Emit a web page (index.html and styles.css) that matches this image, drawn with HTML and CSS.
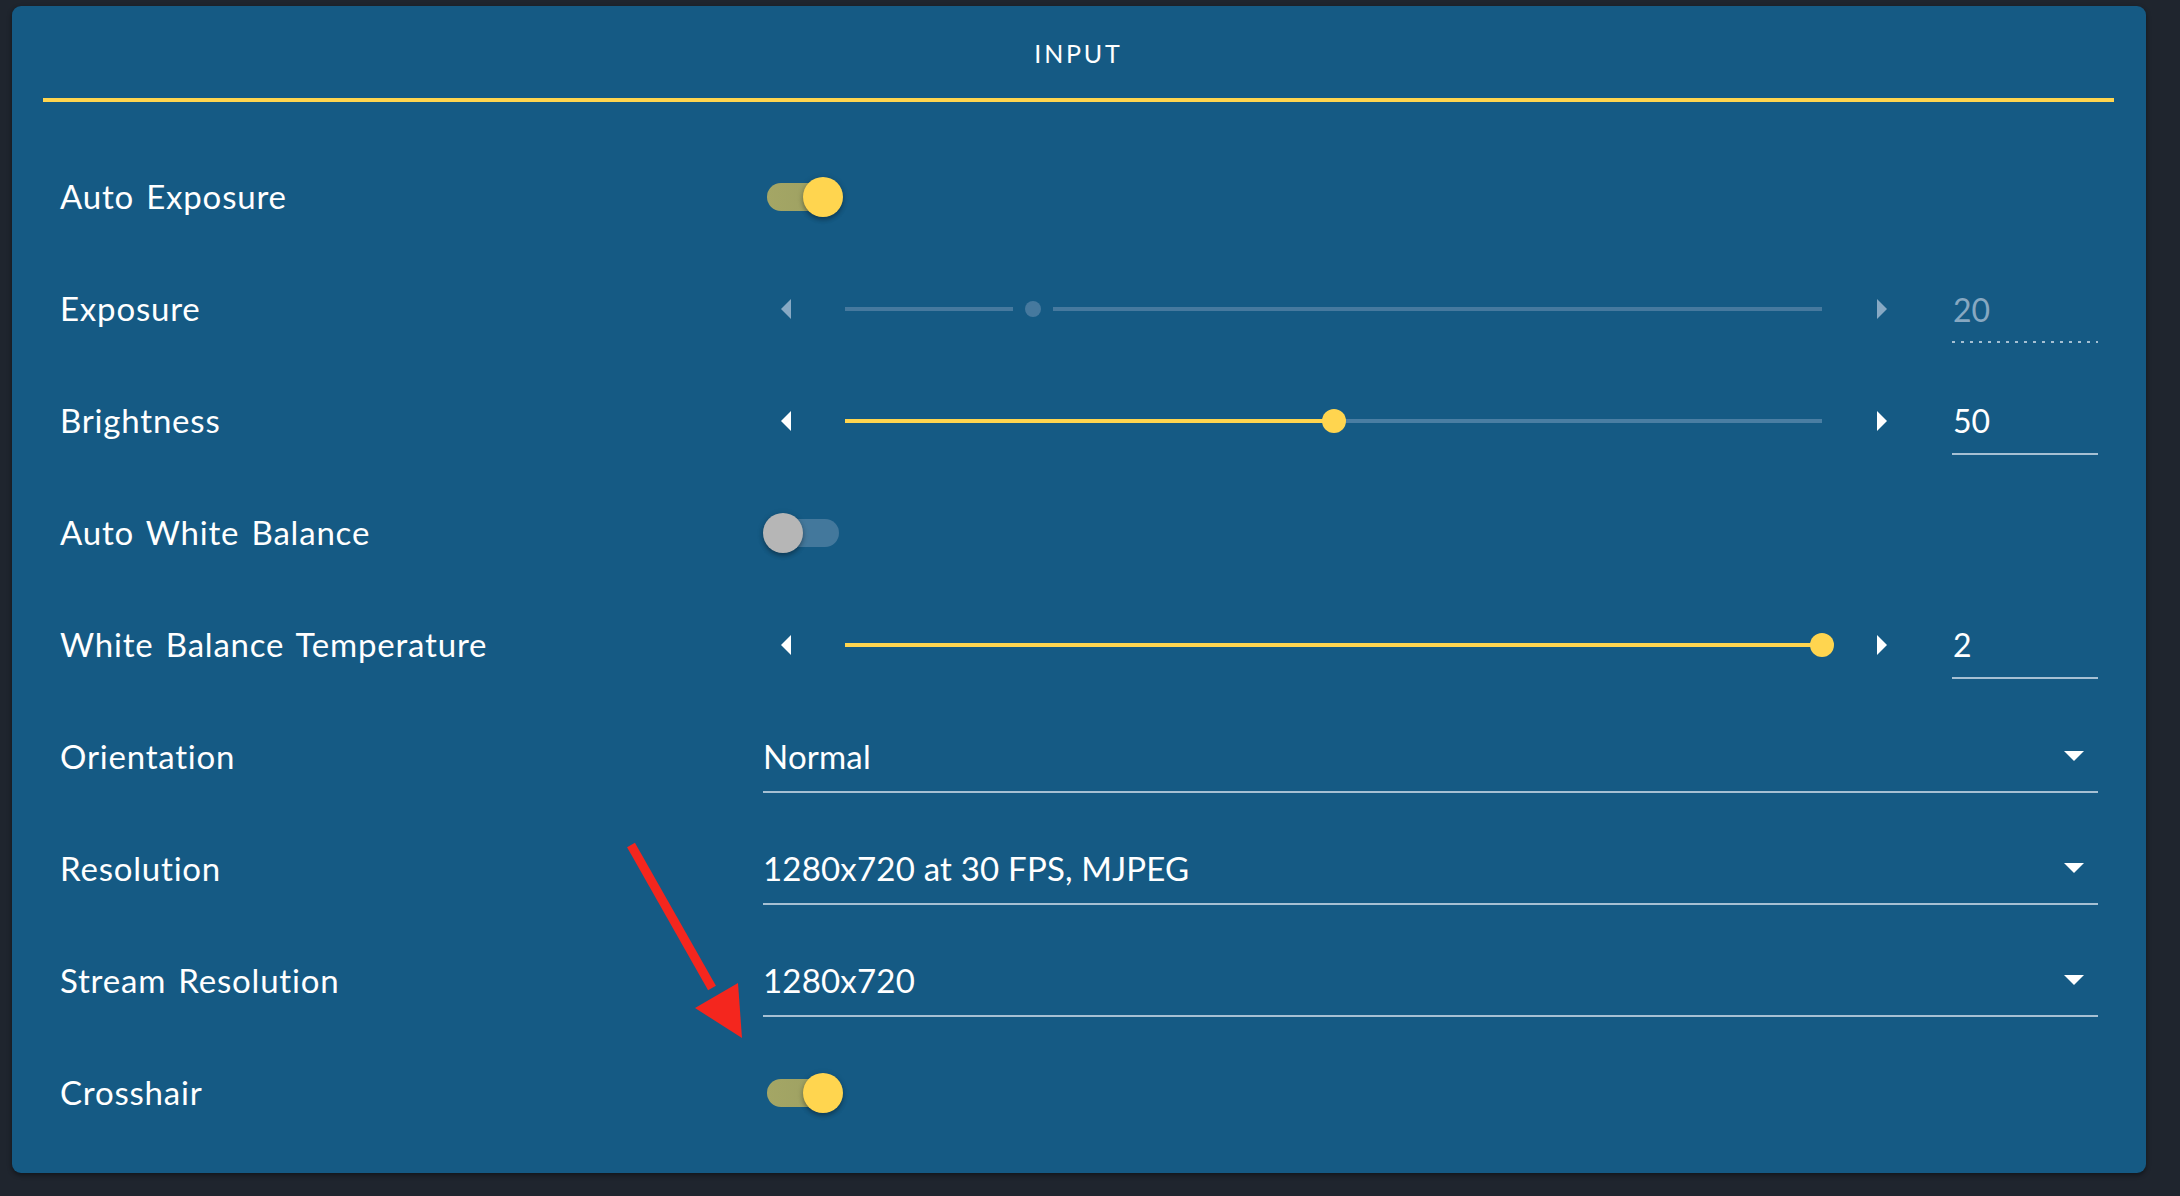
FILE: index.html
```html
<!DOCTYPE html>
<html lang="en">
<head>
<meta charset="utf-8">
<title>Input settings</title>
<link rel="stylesheet" href="styles.css">
</head>
<body>
<div class="card">
  <div class="header"><h2 class="title">INPUT</h2></div>
  <div class="rule"></div>
  <div class="rows">
    <div class="row">
      <div class="label">Auto Exposure</div>
      <div class="control">
        <span class="toggle on"><span class="track"></span><span class="thumb"></span></span>
      </div>
    </div>

    <div class="row">
      <div class="label">Exposure</div>
      <div class="control slider-ctl disabled">
        <span class="step"><span class="tri left"></span></span>
        <div class="slider">
          <span class="seg" style="left:0;width:calc(19.24% - 20px)"></span>
          <span class="seg" style="left:calc(19.24% + 20px);right:0"></span>
          <span class="knob small" style="left:19.24%"></span>
        </div>
        <span class="step"><span class="tri right"></span></span>
        <div class="field dotted">20</div>
      </div>
    </div>

    <div class="row">
      <div class="label">Brightness</div>
      <div class="control slider-ctl">
        <span class="step"><span class="tri left"></span></span>
        <div class="slider">
          <span class="rail"></span>
          <span class="fill" style="width:50%"></span>
          <span class="knob" style="left:50%"></span>
        </div>
        <span class="step"><span class="tri right"></span></span>
        <div class="field">50</div>
      </div>
    </div>

    <div class="row">
      <div class="label">Auto White Balance</div>
      <div class="control">
        <span class="toggle off"><span class="track"></span><span class="thumb"></span></span>
      </div>
    </div>

    <div class="row">
      <div class="label">White Balance Temperature</div>
      <div class="control slider-ctl">
        <span class="step"><span class="tri left"></span></span>
        <div class="slider">
          <span class="rail"></span>
          <span class="fill" style="width:100%"></span>
          <span class="knob" style="left:100%"></span>
        </div>
        <span class="step"><span class="tri right"></span></span>
        <div class="field">2</div>
      </div>
    </div>

    <div class="row">
      <div class="label">Orientation</div>
      <div class="control">
        <div class="select"><span>Normal</span><span class="caret"></span></div>
      </div>
    </div>

    <div class="row">
      <div class="label">Resolution</div>
      <div class="control">
        <div class="select"><span>1280x720 at 30 FPS, MJPEG</span><span class="caret"></span></div>
      </div>
    </div>

    <div class="row">
      <div class="label">Stream Resolution</div>
      <div class="control">
        <div class="select"><span>1280x720</span><span class="caret"></span></div>
      </div>
    </div>

    <div class="row">
      <div class="label">Crosshair</div>
      <div class="control">
        <span class="toggle on"><span class="track"></span><span class="thumb"></span></span>
      </div>
    </div>
  </div>
</div>

<svg class="annotation" width="2180" height="1196" viewBox="0 0 2180 1196" aria-hidden="true">
  <line x1="631" y1="845" x2="712" y2="988" stroke="#f4261e" stroke-width="9"/>
  <polygon points="742,1038 695,1008 738,983" fill="#f4261e"/>
</svg>
</body>
</html>
```

FILE: styles.css
```css
html, body {
  margin: 0;
  padding: 0;
}

body {
  background: #1f252e;
  width: 2180px;
  height: 1196px;
  overflow: hidden;
  position: relative;
  font-family: Lato, "Noto Sans", "Liberation Sans", sans-serif;
  color: #ffffff;
}

.card {
  margin: 6px 0 0 12px;
  width: 2134px;
  height: 1167px;
  box-sizing: border-box;
  padding: 0 32px 24px 31px;
  background: #155a84;
  border-radius: 9px;
  box-shadow: 0 2px 5px rgba(0, 0, 0, 0.45);
}

.header {
  height: 92px;
  display: flex;
  align-items: center;
  justify-content: center;
}

.title {
  margin: 0;
  font-size: 25px;
  font-weight: 400;
  letter-spacing: 2.8px;
  padding: 2px 0 0 0;
}

.rule {
  height: 4px;
  background: #ffd54f;
}

.rows {
  padding: 39px 16px 0 17px;
}

.row {
  height: 112px;
  display: grid;
  grid-template-columns: 703px 1fr;
  align-items: center;
}

.label {
  font-size: 33px;
  line-height: 1.2;
  letter-spacing: 0.8px;
  word-spacing: 3px;
}

.control {
  display: flex;
  align-items: center;
}

/* toggle */
.toggle {
  position: relative;
  width: 80px;
  height: 40px;
  display: inline-block;
}

.toggle .track {
  position: absolute;
  left: 4px;
  top: 6px;
  width: 72px;
  height: 28px;
  border-radius: 14px;
}

.toggle .thumb {
  position: absolute;
  top: 0;
  width: 40px;
  height: 40px;
  border-radius: 50%;
  box-shadow: 0 3px 4px rgba(0, 0, 0, 0.25), 0 1px 6px rgba(0, 0, 0, 0.15);
}

.toggle.on .track {
  background: linear-gradient(to right, #a4a665, #9c9f62);
}

.toggle.on .thumb {
  left: 40px;
  background: #ffd54f;
}

.toggle.off .track {
  background: #43789c;
}

.toggle.off .thumb {
  left: 0;
  background: #b6b6b6;
}

/* slider */
.slider-ctl .step {
  width: 48px;
  height: 40px;
  display: flex;
  align-items: center;
  justify-content: center;
}

.tri {
  width: 0;
  height: 0;
  border-top: 10px solid transparent;
  border-bottom: 10px solid transparent;
}

.tri.left {
  border-right: 10px solid #ffffff;
  margin-left: -2px;
}

.tri.right {
  border-left: 10px solid #ffffff;
  margin-left: 2px;
}

.slider {
  position: relative;
  flex: 1;
  height: 24px;
  margin: 0 35px 0 34px;
}

.rail,
.fill,
.seg {
  position: absolute;
  top: 10px;
  height: 4px;
  left: 0;
}

.rail {
  right: 0;
  background: #4a7ea3;
}

.fill {
  background: #ffd54f;
}

.seg {
  background: #46799e;
}

.knob {
  position: absolute;
  top: 0;
  width: 24px;
  height: 24px;
  border-radius: 50%;
  background: #ffd54f;
  transform: translateX(-50%);
}

.knob.small {
  top: 4px;
  width: 16px;
  height: 16px;
  background: #46799e;
}

.field {
  width: 146px;
  height: 68px;
  margin-left: 47px;
  box-sizing: border-box;
  display: flex;
  align-items: center;
  padding-left: 1px;
  font-size: 32px;
  border-bottom: 2px solid #a6c0d3;
}

.disabled .tri.left {
  border-right-color: #87a9c4;
}

.disabled .tri.right {
  border-left-color: #87a9c4;
}

.field.dotted {
  color: #87a8c1;
  border-bottom: none;
  background-image: repeating-linear-gradient(to right, #a6c0d3 0 3px, transparent 3px 9px);
  background-size: 100% 2px;
  background-position: left bottom;
  background-repeat: no-repeat;
}

/* select */
.select {
  flex: 1;
  height: 72px;
  box-sizing: border-box;
  display: flex;
  align-items: center;
  justify-content: space-between;
  border-bottom: 2px solid #a6c0d3;
  font-size: 33px;
  letter-spacing: 0.2px;
}

.caret {
  width: 0;
  height: 0;
  border-left: 10px solid transparent;
  border-right: 10px solid transparent;
  border-top: 10px solid #ffffff;
  margin-right: 14px;
}

.annotation {
  position: absolute;
  left: 0;
  top: 0;
  pointer-events: none;
}
```
